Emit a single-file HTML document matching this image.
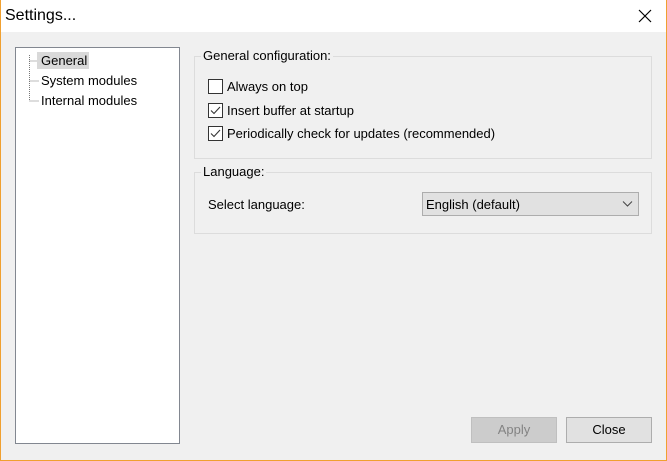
<!DOCTYPE html>
<html><head><style>
*{margin:0;padding:0;box-sizing:border-box}
body{width:667px;height:461px;overflow:hidden;background:#f0f0f0;font-family:"Liberation Sans",sans-serif;font-size:13px;color:#000;position:relative}
.a{position:absolute}
.frame{left:0;top:0;width:667px;height:461px;border:1px solid #f0a030;border-top:none}
.title{left:1px;top:0;width:665px;height:32px;background:#fff}
.gb{border:1px solid #dcdcdc}
.lbl{background:#f0f0f0;padding:0 2px;line-height:14px}
.cb{width:15px;height:15px;border:1px solid #333;background:#fff}
.btn{height:26px;text-align:center;line-height:24px;font-size:13px}
</style></head><body>
<div class="a title"></div>
<div class="a" style="left:5px;top:7px;font-size:16px">Settings...</div>
<svg class="a" style="left:638px;top:9px" width="14" height="14"><path d="M1 1L13 13M13 1L1 13" stroke="#000" stroke-width="1.2"/></svg>
<div class="a" style="left:15px;top:47px;width:165px;height:397px;background:#fff;border:1px solid #828790"></div>
<svg class="a" style="left:28px;top:55px" width="12" height="50"><path d="M1.5 0V46M1.5 6H11M1.5 26H11M1.5 46H11" stroke="#777" stroke-dasharray="1 1"/></svg>
<div class="a" style="left:37px;top:52px;width:52px;height:17px;background:#d9d9d9"></div>
<div class="a" style="left:41px;top:53px">General</div>
<div class="a" style="left:41px;top:73px">System modules</div>
<div class="a" style="left:41px;top:93px">Internal modules</div>
<div class="a gb" style="left:194px;top:56px;width:458px;height:103px"></div>
<div class="a lbl" style="left:201px;top:49px">General configuration:</div>
<div class="a cb" style="left:208px;top:79px"></div>
<div class="a" style="left:227px;top:79px">Always on top</div>
<div class="a cb" style="left:208px;top:103px"></div>
<svg class="a" style="left:208px;top:103px" width="15" height="15"><path d="M3 7.5L6 10.5L12 4" stroke="#333" fill="none" stroke-width="1.1"/></svg>
<div class="a" style="left:227px;top:103px">Insert buffer at startup</div>
<div class="a cb" style="left:208px;top:126px"></div>
<svg class="a" style="left:208px;top:126px" width="15" height="15"><path d="M3 7.5L6 10.5L12 4" stroke="#333" fill="none" stroke-width="1.1"/></svg>
<div class="a" style="left:227px;top:126px">Periodically check for updates (recommended)</div>
<div class="a gb" style="left:194px;top:172px;width:458px;height:62px"></div>
<div class="a lbl" style="left:201px;top:165px">Language:</div>
<div class="a" style="left:208px;top:197px">Select language:</div>
<div class="a" style="left:422px;top:192px;width:217px;height:24px;background:#e1e1e1;border:1px solid #adadad"></div>
<div class="a" style="left:426px;top:197px">English (default)</div>
<svg class="a" style="left:622px;top:200px" width="12" height="8"><path d="M1 1.5L5.5 6L10 1.5" stroke="#444" fill="none"/></svg>
<div class="a btn" style="left:471px;top:417px;width:86px;background:#cccccc;border:1px solid #bfbfbf;color:#838383">Apply</div>
<div class="a btn" style="left:566px;top:417px;width:86px;background:#e1e1e1;border:1px solid #adadad">Close</div>
<div class="a frame"></div>
</body></html>
